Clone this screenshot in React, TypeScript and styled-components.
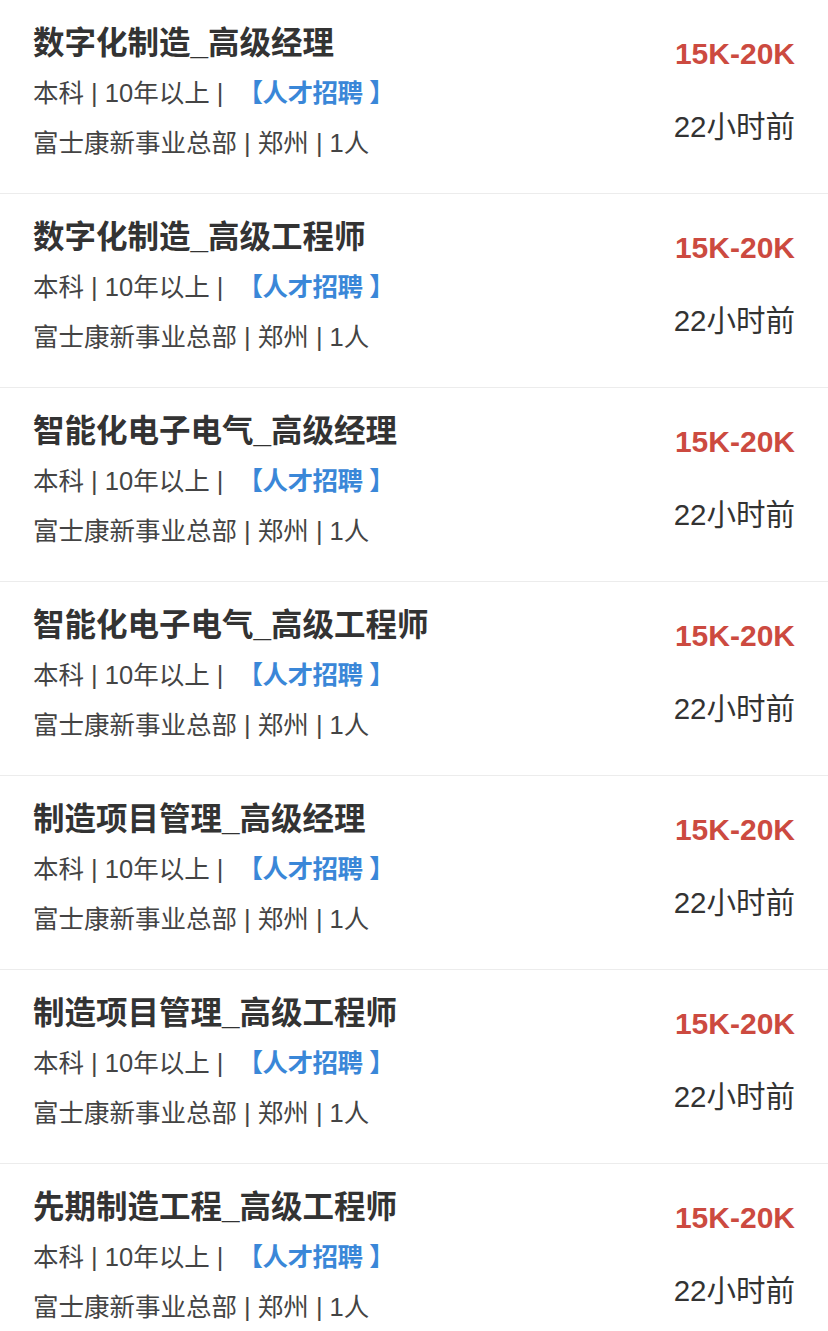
import React from 'react';
import styled, { createGlobalStyle } from 'styled-components';

const GlobalStyle = createGlobalStyle`
  body {
    margin: 0;
    background: #ffffff;
    font-family: "Liberation Sans", "Noto Sans CJK SC", sans-serif;
  }
`;

const List = styled.div`
  width: 100%;
  display: flex;
  flex-direction: column;
`;

const JobRow = styled.div`
  display: flex;
  justify-content: space-between;
  padding: 18px 33px 25px 33px;
  border-bottom: 1px solid #ececec;
`;

const Info = styled.div`
  display: flex;
  flex-direction: column;
`;

const Title = styled.div`
  font-size: 31.5px;
  line-height: 50px;
  font-weight: bold;
  color: #333333;
`;

const Line = styled.div`
  font-size: 25.5px;
  line-height: 50px;
  color: #444444;
  white-space: pre;
`;

const Tag = styled.span`
  color: #3a87d8;
  font-weight: bold;
  letter-spacing: -0.5px;
`;

const Side = styled.div`
  display: flex;
  flex-direction: column;
  align-items: flex-end;
  padding-top: 18px;
`;

const Salary = styled.div`
  font-size: 30px;
  line-height: 36px;
  font-weight: bold;
  color: #cc4a40;
`;

const Time = styled.div`
  margin-top: 35px;
  font-size: 29.5px;
  line-height: 40px;
  color: #333333;
`;

type Job = {
  title: string;
  salary: string;
  time: string;
};

const jobs: Job[] = [
  { title: '数字化制造_高级经理', salary: '15K-20K', time: '22小时前' },
  { title: '数字化制造_高级工程师', salary: '15K-20K', time: '22小时前' },
  { title: '智能化电子电气_高级经理', salary: '15K-20K', time: '22小时前' },
  { title: '智能化电子电气_高级工程师', salary: '15K-20K', time: '22小时前' },
  { title: '制造项目管理_高级经理', salary: '15K-20K', time: '22小时前' },
  { title: '制造项目管理_高级工程师', salary: '15K-20K', time: '22小时前' },
  { title: '先期制造工程_高级工程师', salary: '15K-20K', time: '22小时前' },
];

const App: React.FC = () => {
  return (
    <>
      <GlobalStyle />
      <List>
        {jobs.map((job, i) => (
          <JobRow key={i}>
            <Info>
              <Title>{job.title}</Title>
              <Line>
                {'本科 | 10年以上 |  '}
                <Tag>【人才招聘 】</Tag>
              </Line>
              <Line>富士康新事业总部 | 郑州 | 1人</Line>
            </Info>
            <Side>
              <Salary>{job.salary}</Salary>
              <Time>{job.time}</Time>
            </Side>
          </JobRow>
        ))}
      </List>
    </>
  );
};

export default App;
